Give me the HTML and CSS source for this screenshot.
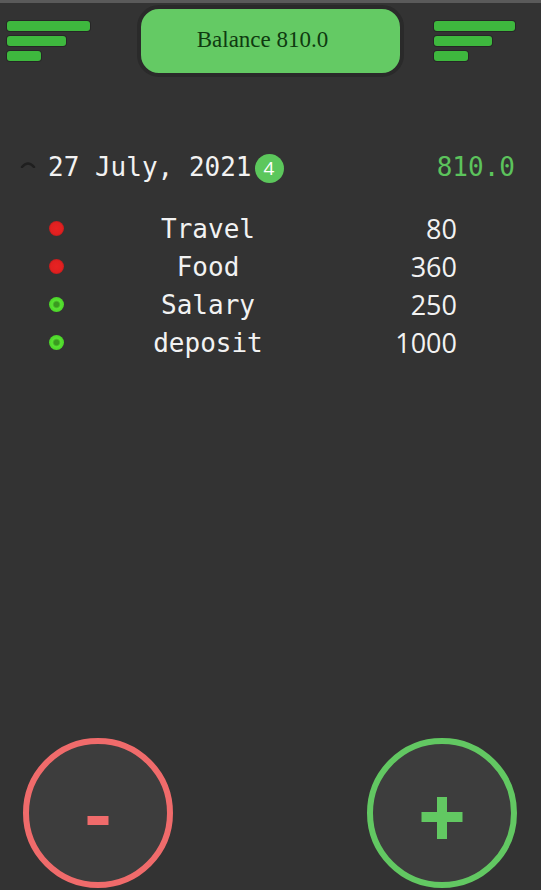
FILE: index.html
```html
<!DOCTYPE html>
<html>
<head>
<meta charset="utf-8">
<link rel="stylesheet" href="styles.css">
</head>
<body>
<div class="app">
  <div class="topline"></div>
  <header class="header">
    <div class="bars bars-left">
      <span class="bar b1"></span>
      <span class="bar b2"></span>
      <span class="bar b3"></span>
    </div>
    <button class="balance">Balance 810.0</button>
    <div class="bars bars-right">
      <span class="bar b1"></span>
      <span class="bar b2"></span>
      <span class="bar b3"></span>
    </div>
  </header>

  <section class="day">
    <div class="day-head">
      <svg class="chev" width="16" height="8" viewBox="0 0 16 8"><path d="M2 7 Q8 0 14 7" fill="none" stroke="#1f1f1f" stroke-width="2.5" stroke-linecap="round"/></svg>
      <span class="date">27 July, 2021</span>
      <span class="badge">4</span>
      <span class="total">810.0</span>
    </div>
    <div class="items">
      <div class="item"><span class="dot red"></span><span class="name">Travel</span><span class="amt">80</span></div>
      <div class="item"><span class="dot red"></span><span class="name">Food</span><span class="amt">360</span></div>
      <div class="item"><span class="dot green"></span><span class="name">Salary</span><span class="amt">250</span></div>
      <div class="item"><span class="dot green"></span><span class="name">deposit</span><span class="amt">1000</span></div>
    </div>
  </section>

  <div class="spacer"></div>

  <footer class="actions">
    <button class="circle minus">
      <svg width="150" height="150" viewBox="0 0 150 150"><rect x="64.5" y="78" width="21" height="9" fill="#f06b6b"/></svg>
    </button>
    <button class="circle plus">
      <svg width="150" height="150" viewBox="0 0 150 150"><rect x="54.5" y="74" width="41" height="10" fill="#62c862"/><rect x="70" y="59" width="10" height="42" fill="#62c862"/></svg>
    </button>
  </footer>
</div>
</body>
</html>
```

FILE: styles.css
```css
* { box-sizing: border-box; }
html, body {
  margin: 0;
  padding: 0;
  background: #333333;
}
.app {
  width: 541px;
  height: 890px;
  display: flex;
  flex-direction: column;
  overflow: hidden;
}
.topline {
  height: 3px;
  background: #5a5a5a;
  flex: none;
}
.header {
  display: flex;
  align-items: flex-start;
  padding-left: 7px;
  padding-top: 2px;
  flex: none;
}
.bars {
  display: flex;
  flex-direction: column;
  gap: 5px;
  margin-top: 16px;
}
.bars-left { width: 83px; }
.bars-right { width: 81px; margin-left: 30px; }
.bar {
  display: block;
  height: 10px;
  border-radius: 3px;
  background: #3eb83e;
  box-shadow: 0 0 0 1px rgba(0,0,0,0.25);
}
.bars-left .b1 { width: 83px; }
.bars-left .b2 { width: 59px; }
.bars-left .b3 { width: 34px; }
.bars-right .b1 { width: 81px; }
.bars-right .b2 { width: 58px; }
.bars-right .b3 { width: 34px; }
.balance {
  margin-left: 47px;
  width: 267px;
  height: 72px;
  border: 4px solid #2a2a2a;
  border-radius: 22px;
  background: #64ca64;
  color: #0f3a10;
  font-family: "Liberation Serif", "DejaVu Serif", serif;
  font-size: 23px;
  padding: 0 16px 2px 0;
  cursor: pointer;
}
.day {
  margin-top: 73px;
  flex: none;
}
.day-head {
  display: flex;
  align-items: center;
  height: 34px;
  padding-left: 20px;
  padding-right: 26px;
}
.chev { flex: none; margin-top: -6px; }
.date {
  margin-left: 12px;
  font-family: "DejaVu Sans Mono", "Liberation Mono", monospace;
  font-size: 26px;
  color: #f2f2f2;
}
.badge {
  width: 29px;
  height: 29px;
  border-radius: 50%;
  background: #5cc75c;
  color: #ffffff;
  font-family: "Open Sans", "Noto Sans", sans-serif;
  font-size: 19px;
  display: flex;
  align-items: center;
  justify-content: center;
  margin-left: 3px;
  margin-top: 2px;
}
.total {
  margin-left: auto;
  font-family: "DejaVu Sans Mono", "Liberation Mono", monospace;
  font-size: 26px;
  color: #5cc35c;
}
.items {
  margin-top: 25px;
  display: flex;
  flex-direction: column;
}
.item {
  display: grid;
  grid-template-columns: 112px 192px 153px;
  align-items: center;
  height: 38px;
}
.dot {
  width: 15px;
  height: 15px;
  border-radius: 50%;
  justify-self: center;
  margin-left: 1px;
}
.dot.red {
  background: radial-gradient(circle, #e82222 0%, #e02020 55%, #b01818 80%, rgba(51,51,51,0) 100%);
}
.dot.green {
  background: radial-gradient(circle, #3a9a20 0%, #3a9a20 22%, #58e232 40%, #4ad428 70%, rgba(51,51,51,0) 100%);
}
.name {
  text-align: center;
  font-family: "DejaVu Sans Mono", "Liberation Mono", monospace;
  font-size: 26px;
  color: #f2f2f2;
  margin-top: 2px;
}
.amt {
  text-align: right;
  font-family: "Open Sans", "Noto Sans", sans-serif;
  font-size: 27px;
  color: #f2f2f2;
}
.spacer { flex: 1; }
.actions {
  flex: none;
  display: flex;
  justify-content: space-between;
  padding: 0 24px 2px 23px;
}
.circle {
  width: 150px;
  height: 150px;
  border-radius: 50%;
  background: #3d3d3d;
  padding: 0;
  position: relative;
  cursor: pointer;
  display: block;
}
.circle svg {
  position: absolute;
  left: -6px;
  top: -6px;
}
.minus { border: 6px solid #f06b6b; }
.plus { border: 6px solid #62c862; }
```
